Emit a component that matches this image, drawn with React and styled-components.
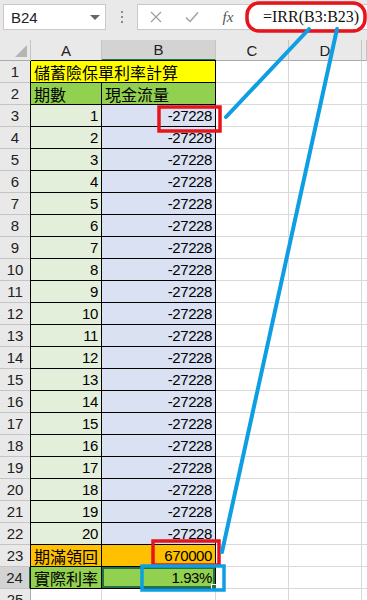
import React from "react";
import styled, { createGlobalStyle } from "styled-components";

const GlobalStyle = createGlobalStyle`
  html, body {
    margin: 0;
    padding: 0;
    background: #ffffff;
  }
  body {
    font-family: "Liberation Sans", Arial, sans-serif;
    width: 367px;
    height: 600px;
    overflow: hidden;
  }
`;

const CJK = `"Noto Sans CJK TC", "Liberation Sans", sans-serif`;

const Page = styled.div`
  position: relative;
  width: 367px;
  height: 600px;
  overflow: hidden;
  background: #fff;
`;

const TopBar = styled.div`
  display: flex;
  align-items: flex-start;
  height: 40px;
  box-sizing: border-box;
  padding: 4px 0 0 3px;
  background: #e9e9e9;
`;

const NameBox = styled.div`
  display: flex;
  align-items: center;
  justify-content: space-between;
  width: 103px;
  height: 26px;
  box-sizing: border-box;
  padding: 0 5px 0 7px;
  background: #fff;
  border: 1px solid #c9c9c9;
  font-size: 15px;
  color: #222;
`;

const DropArrow = styled.span`
  width: 0;
  height: 0;
  border-left: 5px solid transparent;
  border-right: 5px solid transparent;
  border-top: 5px solid #666;
`;

const Dots = styled.div`
  display: flex;
  flex-direction: column;
  gap: 3px;
  width: 31px;
  height: 26px;
  align-items: center;
  justify-content: center;
  span {
    width: 2px;
    height: 2px;
    background: #8a8a8a;
  }
`;

const FormulaBox = styled.div`
  flex: 1;
  display: flex;
  align-items: center;
  height: 26px;
  box-sizing: border-box;
  background: #fff;
  border: 1px solid #c9c9c9;
  border-right: none;
`;

const IconSlot = styled.div`
  display: flex;
  align-items: center;
  justify-content: center;
  width: ${(p) => p.$w}px;
  height: 24px;
  color: #9a9a9a;
`;

const Fx = styled.span`
  font-family: "Liberation Serif", serif;
  font-style: italic;
  font-size: 15px;
  color: #555;
`;

const FormulaText = styled.div`
  padding-left: 17px;
  font-family: "Liberation Serif", serif;
  font-size: 16px;
  color: #111;
  white-space: nowrap;
`;

const Sheet = styled.div`
  display: grid;
  grid-template-columns: 31px 71px 114px 73px 73px 5px;
  grid-template-rows: 21px;
  grid-auto-rows: 22px;
`;

const ColHead = styled.div`
  display: flex;
  align-items: center;
  justify-content: center;
  box-sizing: border-box;
  background: ${(p) => (p.$sel ? "#d3d3d3" : "#e9e9e9")};
  border-right: 1px solid #c4c4c4;
  border-bottom: ${(p) => (p.$sel ? "2px solid #217346" : "1px solid #ababab")};
  font-size: 15px;
  color: #222;
`;

const Corner = styled.div`
  position: relative;
  box-sizing: border-box;
  background: #e9e9e9;
  border-right: 1px solid #c4c4c4;
  border-bottom: 1px solid #ababab;
  &::after {
    content: "";
    position: absolute;
    right: 3px;
    bottom: 3px;
    width: 0;
    height: 0;
    border-left: 12px solid transparent;
    border-bottom: 12px solid #b5b5b5;
  }
`;

const RowHead = styled.div`
  display: flex;
  align-items: center;
  justify-content: center;
  box-sizing: border-box;
  background: ${(p) => (p.$sel ? "#d3d3d3" : "#e9e9e9")};
  border-right: ${(p) => (p.$sel ? "2px solid #217346" : "1px solid #ababab")};
  border-bottom: 1px solid #c4c4c4;
  font-size: 15px;
  color: #222;
`;

const Cell = styled.div`
  position: relative;
  display: flex;
  align-items: center;
  justify-content: ${(p) => (p.$right ? "flex-end" : "flex-start")};
  box-sizing: border-box;
  padding: 0 3px;
  grid-column: ${(p) => (p.$span ? `span ${p.$span}` : "auto")};
  background: ${(p) => p.$bg || "#fff"};
  border-right: 1px solid ${(p) => (p.$ruled ? "#000" : "#d9d9d9")};
  border-bottom: 1px solid ${(p) => (p.$ruled ? "#000" : "#d9d9d9")};
  box-shadow: ${(p) =>
    [
      p.$leftRule ? "-1px 0 0 #000" : null,
      p.$topRule ? "0 -1px 0 #000" : null,
      p.$selected ? "inset 0 0 0 2px #217346" : null,
    ]
      .filter(Boolean)
      .join(", ") || "none"};
  font-family: ${(p) => (p.$cjk ? CJK : `"Liberation Sans", Arial, sans-serif`)};
  font-size: ${(p) => (p.$cjk ? "16px" : "15px")};
  letter-spacing: ${(p) => (p.$cjk ? "0" : "-0.4px")};
  color: #000;
  white-space: nowrap;
  overflow: visible;
`;

const FillHandle = styled.span`
  position: absolute;
  right: -3px;
  bottom: -3px;
  width: 5px;
  height: 5px;
  background: #217346;
  border: 1px solid #fff;
`;

const Overlay = styled.svg`
  position: absolute;
  left: 0;
  top: 0;
  pointer-events: none;
`;

const YELLOW = "#ffff00";
const GREEN = "#92d050";
const LIGHT_GREEN = "#e4efdb";
const LIGHT_BLUE = "#dae1f2";
const ORANGE = "#ffc000";

const blank = (key) => [
  <Cell key={`${key}c`} />,
  <Cell key={`${key}d`} />,
  <Cell key={`${key}e`} />,
];

const rows = [];
rows.push(
  <RowHead key="h1">1</RowHead>,
  <Cell key="a1" $span={2} $bg={YELLOW} $cjk $ruled $leftRule $topRule>
    儲蓄險保單利率計算
  </Cell>,
  ...blank("r1")
);
rows.push(
  <RowHead key="h2">2</RowHead>,
  <Cell key="a2" $bg={GREEN} $cjk $ruled $leftRule>
    期數
  </Cell>,
  <Cell key="b2" $bg={GREEN} $cjk $ruled>
    現金流量
  </Cell>,
  ...blank("r2")
);
for (let r = 3; r <= 22; r++) {
  rows.push(
    <RowHead key={`h${r}`}>{r}</RowHead>,
    <Cell key={`a${r}`} $bg={LIGHT_GREEN} $right $ruled $leftRule>
      {r - 2}
    </Cell>,
    <Cell key={`b${r}`} $bg={LIGHT_BLUE} $right $ruled>
      -27228
    </Cell>,
    ...blank(`r${r}`)
  );
}
rows.push(
  <RowHead key="h23">23</RowHead>,
  <Cell key="a23" $bg={ORANGE} $cjk $ruled $leftRule>
    期滿領回
  </Cell>,
  <Cell key="b23" $bg={ORANGE} $right $ruled>
    670000
  </Cell>,
  ...blank("r23")
);
rows.push(
  <RowHead key="h24" $sel>
    24
  </RowHead>,
  <Cell key="a24" $bg={GREEN} $cjk $ruled $leftRule>
    實際利率
  </Cell>,
  <Cell key="b24" $bg={GREEN} $right $ruled $selected>
    1.93%
    <FillHandle />
  </Cell>,
  ...blank("r24")
);
rows.push(<RowHead key="h25">25</RowHead>, <Cell key="a25" />, <Cell key="b25" />, ...blank("r25"));

export default function App() {
  return (
    <Page>
      <GlobalStyle />
      <TopBar>
        <NameBox>
          B24
          <DropArrow />
        </NameBox>
        <Dots>
          <span />
          <span />
          <span />
        </Dots>
        <FormulaBox>
          <IconSlot $w={36}>
            <svg width="12" height="12" viewBox="0 0 12 12">
              <path d="M1 1 L11 11 M11 1 L1 11" stroke="#a0a0a0" strokeWidth="1.3" fill="none" />
            </svg>
          </IconSlot>
          <IconSlot $w={36}>
            <svg width="14" height="12" viewBox="0 0 14 12">
              <path d="M1 6.5 L5 10.5 L13 1.5" stroke="#a0a0a0" strokeWidth="1.5" fill="none" />
            </svg>
          </IconSlot>
          <IconSlot $w={36}>
            <Fx>fx</Fx>
          </IconSlot>
          <FormulaText>=IRR(B3:B23)</FormulaText>
        </FormulaBox>
      </TopBar>
      <Sheet>
        <Corner />
        <ColHead>A</ColHead>
        <ColHead $sel>B</ColHead>
        <ColHead>C</ColHead>
        <ColHead>D</ColHead>
        <ColHead />
        {rows}
      </Sheet>
      <Overlay width="367" height="600" viewBox="0 0 367 600">
        <g fill="none" strokeWidth="3.5">
          <rect x="247" y="3" width="118" height="28" rx="12" stroke="#e8141c" />
          <rect x="159" y="107" width="61" height="24" stroke="#e8141c" />
          <rect x="153" y="541" width="66" height="24" stroke="#e8141c" />
          <rect x="142" y="566" width="82" height="24" stroke="#0e9ee3" />
        </g>
        <g stroke="#0e9ee3" strokeWidth="4" strokeLinecap="round">
          <line x1="309" y1="29" x2="226" y2="117" />
          <line x1="337" y1="29" x2="222" y2="552" />
        </g>
      </Overlay>
    </Page>
  );
}
